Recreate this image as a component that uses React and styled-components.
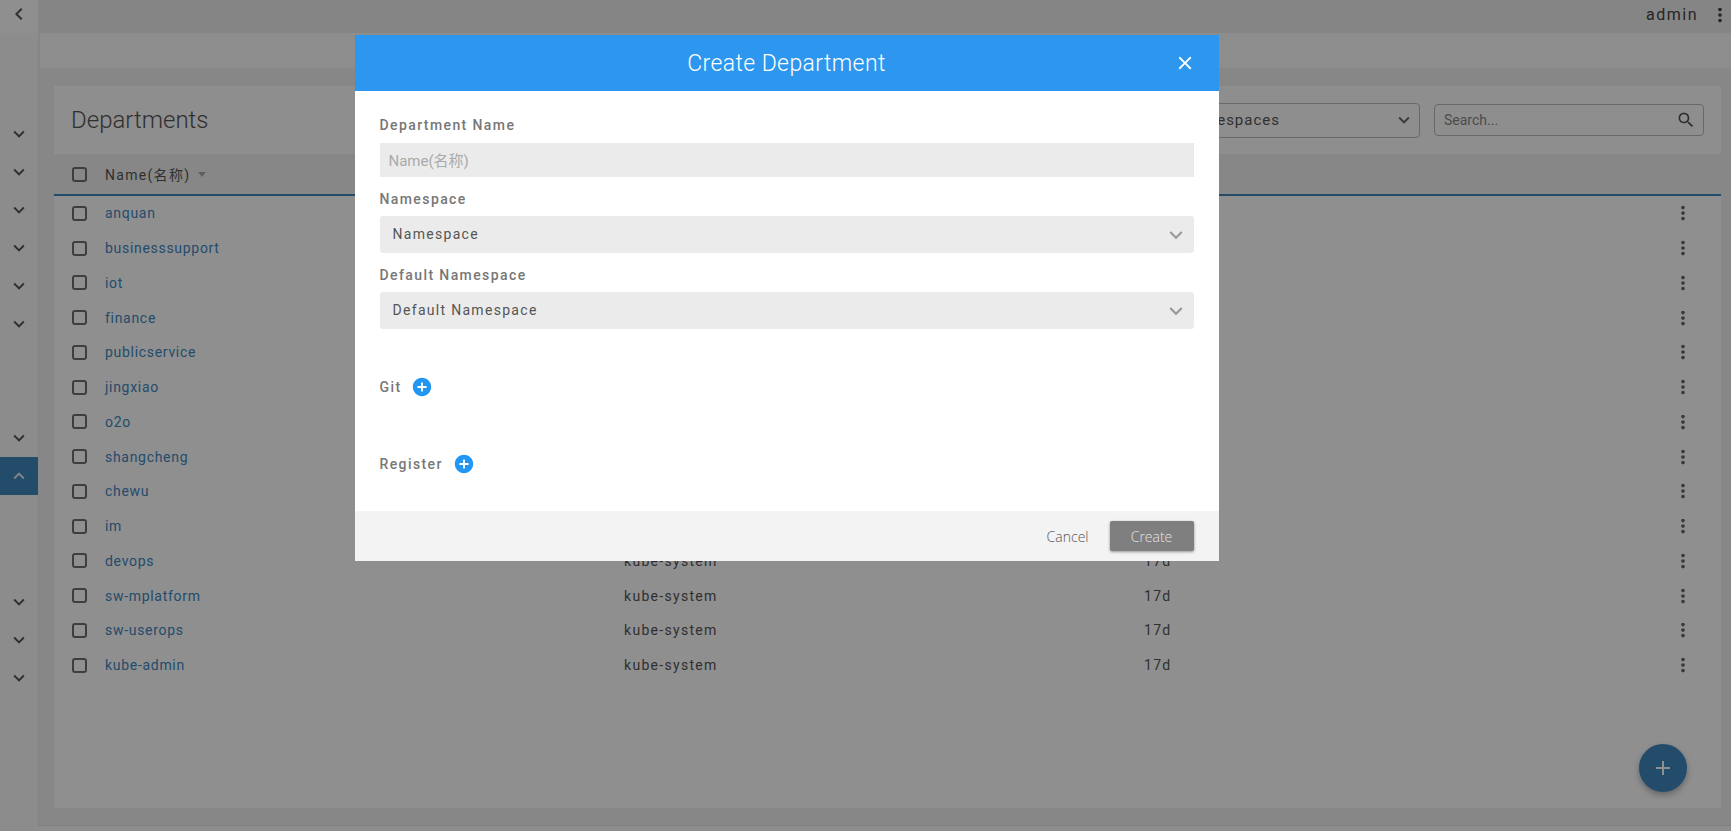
import React from "react";
import styled, { createGlobalStyle } from "styled-components";
import {
  MdAdd,
  MdAddCircle,
  MdChevronLeft,
  MdClose,
  MdKeyboardArrowDown,
  MdKeyboardArrowUp,
  MdMoreVert,
  MdSearch,
} from "react-icons/md";

const accent = "#3f88bf";

const GlobalStyle = createGlobalStyle`
  html, body {
    margin: 0;
    height: 100%;
    overflow: hidden;
    font-family: Roboto, "Noto Sans CJK SC", sans-serif;
    background: #f1f1f1;
  }
  * { box-sizing: border-box; }
`;

const Page = styled.div`
  display: grid;
  grid-template-columns: 38px 1fr;
  width: 1731px;
  height: 831px;
`;

const Sidebar = styled.aside`
  background: #fafafa;
  box-shadow: 1px 0 2px rgba(0, 0, 0, 0.02);
  z-index: 1;
`;

const SideTop = styled.div`
  height: 33px;
  display: flex;
  align-items: center;
  justify-content: center;
  color: #555;
  font-size: 24px;
  margin-bottom: 82px;
  padding-right: 1px;
  background: #ffffff;
  & svg { margin-top: -6px; }
`;

const SideItem = styled.div`
  height: 38px;
  margin-top: ${(p) => p.$gap || 0}px;
  padding-right: 1px;
  display: flex;
  align-items: center;
  justify-content: center;
  font-size: 22px;
  color: ${(p) => (p.$active ? "#e6eef5" : "#555")};
  background: ${(p) => (p.$active ? accent : "transparent")};
`;

const Main = styled.main`
  display: flex;
  flex-direction: column;
  min-width: 0;
`;

const TopBar = styled.header`
  height: 33px;
  flex: none;
  display: flex;
  align-items: center;
  justify-content: flex-end;
  background: #eeeeee;
  color: #444;
  font-size: 16px;
  letter-spacing: 1.5px;
  gap: 11px;
  padding-bottom: 4px;
  & svg { font-size: 22px; }
`;

const SubBar = styled.div`
  height: 35px;
  flex: none;
  margin-left: 2px;
  background: #fbfbfb;
`;

const Content = styled.div`
  flex: 1;
  padding: 18px 10px 17px 16px;
  min-height: 0;
`;

const Card = styled.section`
  height: 100%;
  background: #ffffff;
  position: relative;
  display: flex;
  flex-direction: column;
`;

const CardHead = styled.div`
  height: 68px;
  flex: none;
  background: #fdfdfd;
  display: flex;
  align-items: center;
  padding: 0 17px;
`;

const Title = styled.h1`
  margin: 0;
  flex: 1;
  font-weight: 300;
  font-size: 24px;
  color: #555;
`;

const NsSelect = styled.div`
  width: 300px;
  height: 35px;
  display: flex;
  align-items: center;
  justify-content: flex-end;
  border: 1px solid #bbb;
  border-radius: 4px;
  color: #555;
  font-size: 15px;
  letter-spacing: 1px;
  padding-right: 4px;
  margin-right: -1px;
  & span { margin-right: 113px; padding-bottom: 1px; }
  & svg { font-size: 22px; color: #666; }
`;

const SearchBox = styled.div`
  width: 270px;
  height: 32px;
  margin-left: 15px;
  display: flex;
  align-items: center;
  justify-content: space-between;
  border: 1px solid #bbb;
  border-radius: 4px;
  color: #888;
  font-size: 14px;
  padding: 0 7px 0 9px;
  & svg { font-size: 20px; color: #555; }
`;

const TableHead = styled.div`
  height: 42px;
  flex: none;
  background: #f1f1f1;
  border-bottom: 2px solid ${accent};
  display: flex;
  align-items: center;
  padding-left: 18px;
  color: #555;
  font-size: 14px;
  letter-spacing: 1.3px;
`;

const SortMark = styled.i`
  display: inline-block;
  margin-left: 8px;
  border-left: 4px solid transparent;
  border-right: 4px solid transparent;
  border-top: 5px solid #aaa;
`;

const Box = styled.span`
  flex: none;
  width: 15px;
  height: 15px;
  margin-right: 18px;
  border: 2px solid #6f6f6f;
  border-radius: 3px;
`;

const Row = styled.div`
  height: 34.75px;
  display: grid;
  grid-template-columns: 33px 519px 520px 1fr 33px 16px;
  align-items: center;
  padding-left: 18px;
  font-size: 14px;
  letter-spacing: 1.3px;
  color: #555;
  & svg { font-size: 22px; color: #666; }
`;

const NameLink = styled.a`
  color: ${accent};
  letter-spacing: 0.7px;
`;

const Fab = styled.button`
  position: absolute;
  right: 34px;
  bottom: 16px;
  width: 48px;
  height: 48px;
  border: none;
  border-radius: 50%;
  display: flex;
  align-items: center;
  justify-content: center;
  color: #fff;
  font-size: 24px;
  background: ${accent};
  box-shadow: 0 3px 6px rgba(0, 0, 0, 0.3);
`;

const Footer = styled.div`
  height: 6px;
  flex: none;
  background: #fbfbfb;
  border-top: 1px solid #e0e0e0;
`;

const Overlay = styled.div`
  position: fixed;
  inset: 0;
  z-index: 5;
  background: rgba(0, 0, 0, 0.44);
  display: flex;
  justify-content: center;
  align-items: flex-start;
  padding: 35px 158px 0 0;
`;

const Modal = styled.div`
  width: 864px;
  height: 526px;
  background: #fff;
  display: flex;
  flex-direction: column;
`;

const ModalHead = styled.div`
  height: 56px;
  flex: none;
  background: #2d96ee;
  color: #fff;
  position: relative;
  display: flex;
  align-items: center;
  justify-content: center;
  font-weight: 300;
  font-size: 23px;
  letter-spacing: 0.4px;
`;

const CloseIcon = styled(MdClose)`
  position: absolute;
  right: 23px;
  top: 17px;
  font-size: 22px;
`;

const ModalBody = styled.div`
  flex: 1;
  padding: 26px 25px 0 25px;
`;

const Label = styled.div`
  font-size: 14px;
  font-weight: 500;
  line-height: 16px;
  letter-spacing: 1.4px;
  color: #777;
  margin-bottom: 9px;
`;

const TextField = styled.div`
  height: 34px;
  background: #ebebeb;
  color: #aaa;
  font-size: 15px;
  display: flex;
  align-items: center;
  padding: 0 0 2px 9px;
  margin: 10px 0 14px;
`;

const SelectField = styled.div`
  height: 37px;
  background: #ebebeb;
  border-radius: 3px;
  color: #555;
  font-size: 14px;
  letter-spacing: 1.3px;
  display: flex;
  align-items: center;
  justify-content: space-between;
  padding: 0 5px 2px 13px;
  margin-bottom: 14px;
  & svg { font-size: 26px; color: #999; margin-bottom: -3px; }
`;

const AddRow = styled.div`
  display: flex;
  align-items: center;
  gap: 12px;
  height: 20px;
  margin-top: ${(p) => p.$mt}px;
  & svg { font-size: 22px; color: #2196f3; margin-left: -2px; }
  & ${Label} { margin-bottom: 0; }
`;

const ModalFoot = styled.div`
  height: 50px;
  flex: none;
  background: #f3f3f3;
  display: flex;
  align-items: center;
  justify-content: flex-end;
  padding-right: 25px;
  font-family: "Open Sans", sans-serif;
  font-weight: 300;
  font-size: 14px;
`;

const CancelButton = styled.span`
  color: #555;
  margin-right: 21px;
`;

const CreateButton = styled.span`
  width: 84px;
  height: 30px;
  border-radius: 2px;
  display: flex;
  align-items: center;
  justify-content: center;
  background: #7f7f7f;
  color: #e4e4e4;
  box-shadow: 0 1px 3px rgba(0, 0, 0, 0.4);
`;

const names = [
  "anquan",
  "businesssupport",
  "iot",
  "finance",
  "publicservice",
  "jingxiao",
  "o2o",
  "shangcheng",
  "chewu",
  "im",
  "devops",
  "sw-mplatform",
  "sw-userops",
  "kube-admin",
];

const sideItems = [
  {},
  {},
  {},
  {},
  {},
  {},
  { gap: 76 },
  { active: true },
  { gap: 88 },
  {},
  {},
];

export default function App() {
  return (
    <>
      <GlobalStyle />
      <Page>
        <Sidebar>
          <SideTop>
            <MdChevronLeft />
          </SideTop>
          {sideItems.map((item, i) => (
            <SideItem key={i} $gap={item.gap} $active={item.active}>
              {item.active ? <MdKeyboardArrowUp /> : <MdKeyboardArrowDown />}
            </SideItem>
          ))}
        </Sidebar>
        <Main>
          <TopBar>
            admin
            <MdMoreVert />
          </TopBar>
          <SubBar />
          <Content>
            <Card>
              <CardHead>
                <Title>Departments</Title>
                <NsSelect>
                  <span>All Namespaces</span>
                  <MdKeyboardArrowDown />
                </NsSelect>
                <SearchBox>
                  Search...
                  <MdSearch />
                </SearchBox>
              </CardHead>
              <TableHead>
                <Box />
                Name(名称)
                <SortMark />
              </TableHead>
              {names.map((name) => (
                <Row key={name}>
                  <Box />
                  <NameLink>{name}</NameLink>
                  <span>kube-system</span>
                  <span>17d</span>
                  <MdMoreVert />
                </Row>
              ))}
              <Fab>
                <MdAdd />
              </Fab>
            </Card>
          </Content>
          <Footer />
        </Main>
      </Page>
      <Overlay>
        <Modal>
          <ModalHead>
            Create Department
            <CloseIcon />
          </ModalHead>
          <ModalBody>
            <Label>Department Name</Label>
            <TextField>Name(名称)</TextField>
            <Label>Namespace</Label>
            <SelectField>
              Namespace
              <MdKeyboardArrowDown />
            </SelectField>
            <Label>Default Namespace</Label>
            <SelectField>
              Default Namespace
              <MdKeyboardArrowDown />
            </SelectField>
            <AddRow $mt={48}>
              <Label>Git</Label>
              <MdAddCircle />
            </AddRow>
            <AddRow $mt={57}>
              <Label>Register</Label>
              <MdAddCircle />
            </AddRow>
          </ModalBody>
          <ModalFoot>
            <CancelButton>Cancel</CancelButton>
            <CreateButton>Create</CreateButton>
          </ModalFoot>
        </Modal>
      </Overlay>
    </>
  );
}
